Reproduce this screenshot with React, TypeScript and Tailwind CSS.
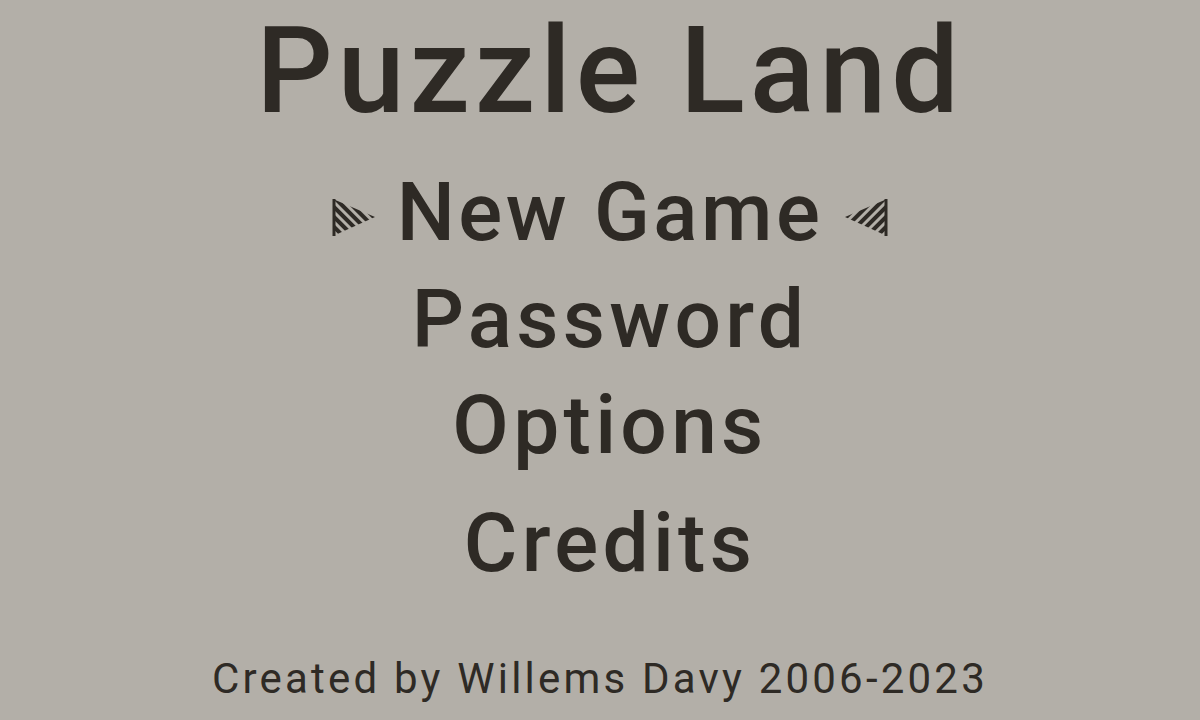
import React from 'react';

function Pointer({ flip = false }: { flip?: boolean }) {
  const id = flip ? 'hatch-r' : 'hatch-l';
  return (
    <svg
      width="44"
      height="40"
      viewBox="0 0 44 40"
      className={`mt-[36px] ${flip ? '-scale-x-100' : ''}`}
      aria-hidden="true"
    >
      <defs>
        <pattern id={id} width="7" height="7" patternUnits="userSpaceOnUse" patternTransform="rotate(-45)">
          <rect width="4" height="7" fill="#2e2a25" />
        </pattern>
      </defs>
      <polygon points="1,1 43,19 1,38" fill={`url(#${id})`} />
      <line x1="2" y1="1" x2="2" y2="38" stroke="#2e2a25" strokeWidth="3" />
    </svg>
  );
}

const items = [
  { label: 'Password', gap: 'mt-[7px]' },
  { label: 'Options', gap: 'mt-[6px]' },
  { label: 'Credits', gap: 'mt-[18px]' },
];

export default function App() {
  return (
    <div
      className="flex h-[720px] w-[1200px] flex-col items-center overflow-hidden bg-[#b3afa8] text-[#2e2a25]"
      style={{ fontFamily: 'Roboto, "Liberation Sans", sans-serif' }}
    >
      <div className="flex flex-col items-center pl-[20px]">
        <h1 className="mt-[1px] text-[120px] font-medium leading-[140px] tracking-[5px]">Puzzle Land</h1>

        <div className="mt-[21px] flex items-start gap-[21px]">
          <Pointer />
          <span className="text-[82px] font-medium leading-[100px] tracking-[3.5px]">New Game</span>
          <Pointer flip />
        </div>

        <ul className="flex flex-col items-center">
          {items.map(({ label, gap }) => (
            <li key={label} className={`${gap} text-[82px] font-medium leading-[100px] tracking-[4.3px]`}>
              {label}
            </li>
          ))}
        </ul>
      </div>

      <p className="mt-auto mb-[16px] text-[42px] leading-[50px] tracking-[3.2px]">Created by Willems Davy 2006-2023</p>
    </div>
  );
}
